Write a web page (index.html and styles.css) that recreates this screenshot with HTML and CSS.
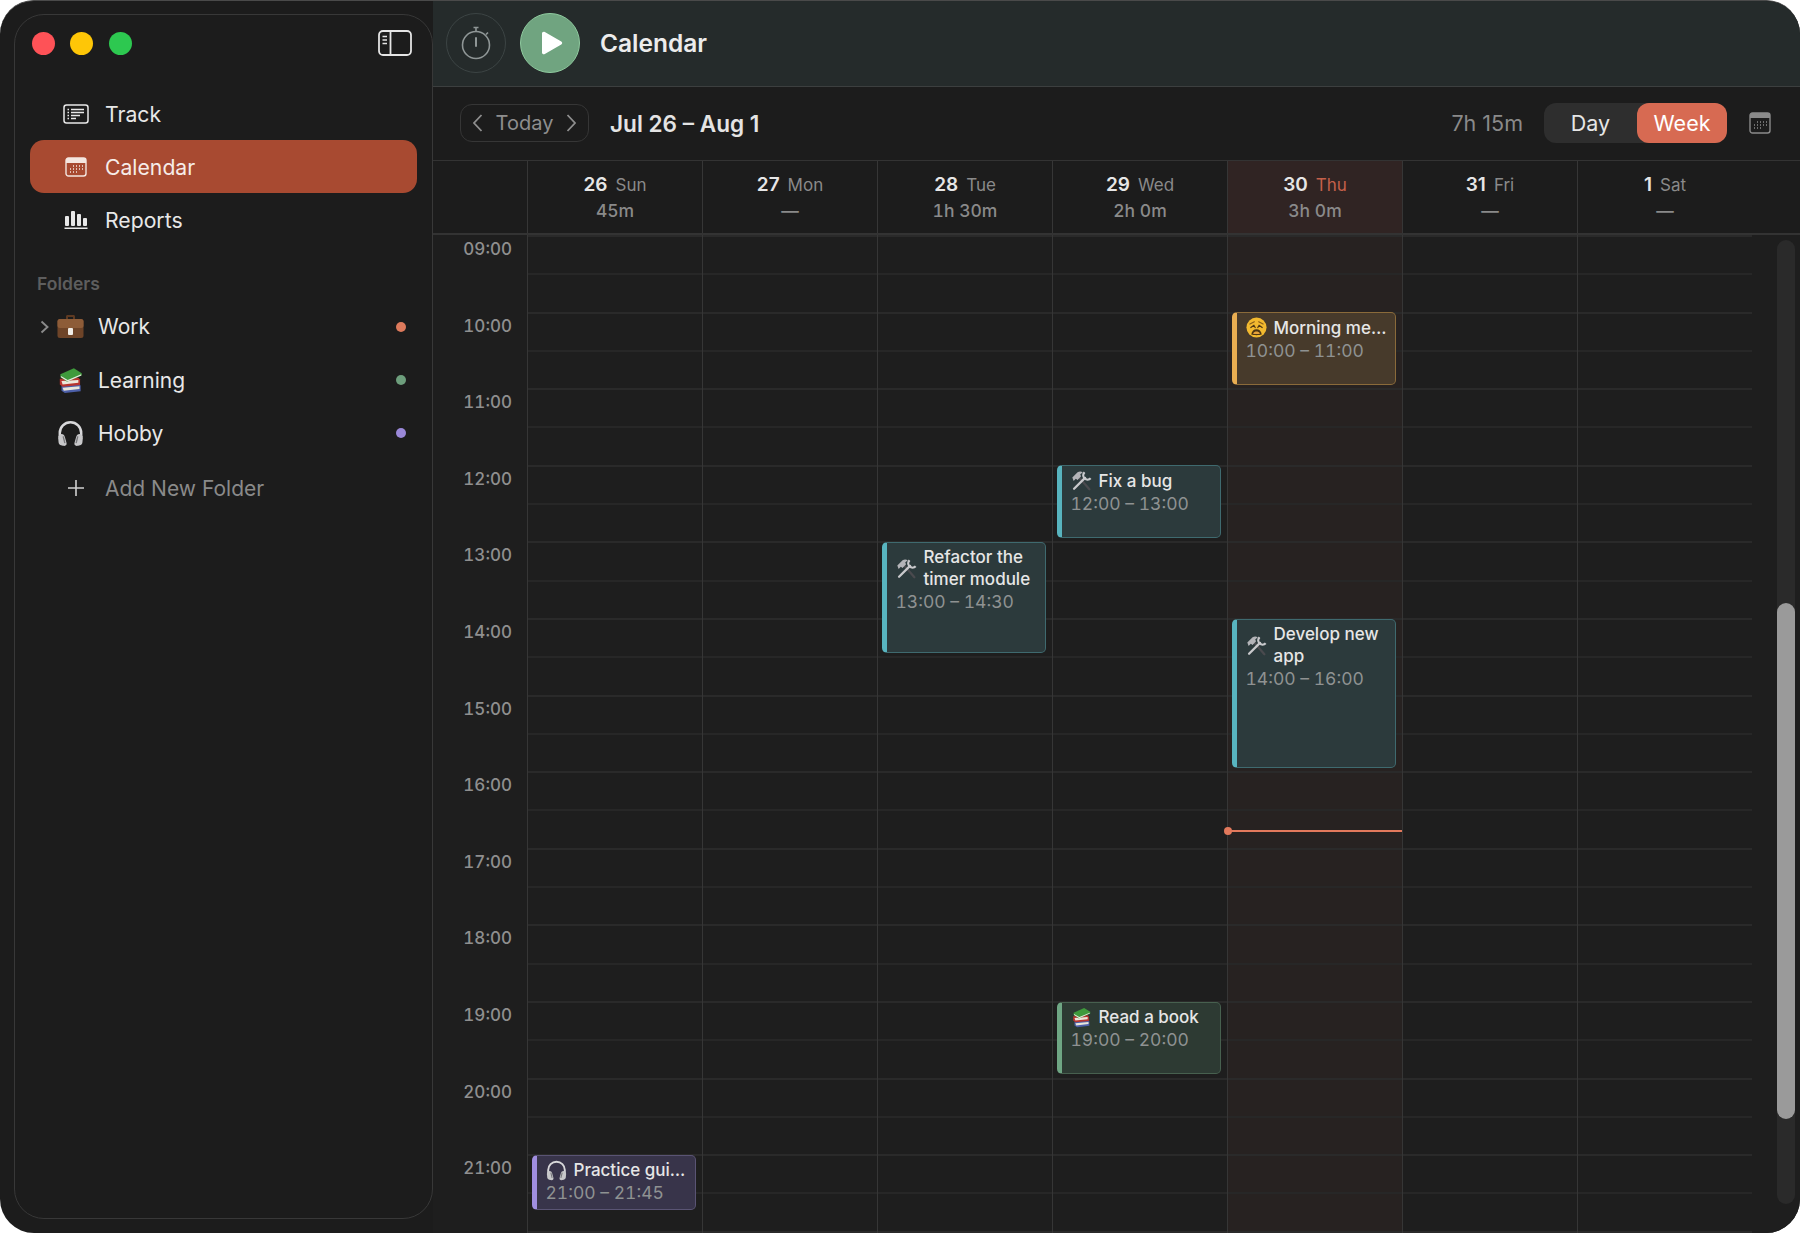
FILE: index.html
```html
<!DOCTYPE html>
<html lang="en">
<head>
<meta charset="UTF-8" />
<meta name="viewport" content="width=device-width, initial-scale=1" />
<title>Calendar</title>
<link rel="stylesheet" href="styles.css">
</head>
<body>

<svg class="defs" width="0" height="0" aria-hidden="true">
  <symbol id="tools" viewBox="0 0 24 24">
    <path d="M8 7 21 22" stroke="#4a4a4e" stroke-width="2.600" stroke-linecap="round"/>
    <path d="M1.500 8.500 7.500 2.500c2-1 4-1 6 0l-3 2.500 1 2-4 4.500-2-1.500-2.500 2.500z" fill="#b4b4b8"/>
    <path d="M3.500 21.500 16 9" stroke="#c9c9cc" stroke-width="2.600" stroke-linecap="round"/>
    <path d="M15.500 2.500c-2 2-2 5 0 7s5 2 7 0" fill="none" stroke="#c9c9cc" stroke-width="2.600"/>
  </symbol>
  <symbol id="books" viewBox="0 0 24 24">
    <path d="M4 16.500 19 15l2 1.500v5L7 23l-3-2z" fill="#4c5fa8"/>
    <path d="M5 18.500 20 17v2.500L6 21z" fill="#e8e4da"/>
    <path d="M2.500 10.500 19 9.500l1.500 1.500v5L5 17.500l-2.500-2z" fill="#b8342f"/>
    <path d="M4 12.500 19 11.500v2.500L5 15.500z" fill="#ece6da"/>
    <path d="M3 6.500 15 1l7 4.500v2L9 13 3 9z" fill="#3f9a3c"/>
    <path d="M3.500 8 9.500 11.500 21.500 6.500v1L9.500 12.800 3.500 9z" fill="#e8e8e0"/>
  </symbol>
  <symbol id="headphones" viewBox="0 0 24 24">
    <path d="M2.500 15v-3.500a9.500 9.500 0 0 1 19 0V15" fill="none" stroke="#d8d8da" stroke-width="2.200"/>
    <path d="M1 16c0-2 1.500-3.500 3-3.500s2.500 1 3 2.500l1.500 5.500c.3 1.500-.5 2.500-2 2.500S2 22.500 1.500 20.500z" fill="#c8c8ca"/>
    <path d="M23 16c0-2-1.500-3.500-3-3.500s-2.500 1-3 2.500l-1.500 5.500c-.3 1.500.5 2.500 2 2.500s4.500-.5 5-2.500z" fill="#c8c8ca"/>
    <path d="M5.500 14.500 7 20.500M18.500 14.500 17 20.500" stroke="#77777a" stroke-width="1.200"/>
  </symbol>
  <symbol id="weary" viewBox="0 0 24 24">
    <circle cx="12" cy="12" r="11.500" fill="#f2b92f"/>
    <path d="M4.500 8 9.500 5.500M19.500 8 14.500 5.500" stroke="#8a5f1a" stroke-width="1.400" stroke-linecap="round"/>
    <path d="M5.500 12 9 9.500 10.500 12M18.500 12 15 9.500 13.500 12" fill="none" stroke="#4d3613" stroke-width="1.400" stroke-linecap="round"/>
    <path d="M6 20c.5-4 3-6 6-6s5.500 2 6 6c-3 1-9 1-12 0z" fill="#4d3613"/>
    <path d="M8 19c1-2 2.500-2.500 4-2.500s3 .5 4 2.500c-2 .6-6 .6-8 0z" fill="#e8a33a"/>
  </symbol>
</svg>

<div class="window">
  <aside class="sidebar">
    <div class="side-panel">
      <div class="titlebar">
        <div class="lights">
          <span class="light light-red"></span>
          <span class="light light-yellow"></span>
          <span class="light light-green"></span>
        </div>
        <svg class="toggle" width="34" height="26" viewBox="0 0 34 26" fill="none" stroke="#e4e4e4" stroke-width="1.800">
          <rect x="1" y="1" width="32" height="24" rx="4"/>
          <path d="M12.500 1v24"/>
          <path d="M4.500 6.500h4.500M4.500 10h4.500M4.500 13.500h4.500" stroke-width="1.500"/>
        </svg>
      </div>

      <nav class="nav">
        <a class="nav-row">
          <span class="nav-icon">
            <svg width="26" height="20" viewBox="0 0 26 20" fill="none" stroke="#e8e8e8">
              <rect x="1" y="1" width="24" height="18" rx="2.500" stroke-width="1.500"/>
              <path d="M8 5.500h13M8 8.500h13M8 11.500h9M8 14.500h5M4.500 5.500h1.500M4.500 8.500h1.500M4.500 11.500h1.500M4.500 14.500h1.500" stroke-width="1.300"/>
            </svg>
          </span>
          Track
        </a>
        <a class="nav-row active">
          <span class="nav-icon">
            <svg width="22" height="20" viewBox="0 0 22 20" fill="none">
              <rect x="1" y="1" width="20" height="18" rx="2.500" stroke="#f4e6e0" stroke-width="1.400"/>
              <path d="M1 6V3.500A2.500 2.500 0 0 1 3.500 1h15A2.500 2.500 0 0 1 21 3.500V6z" fill="#f4e6e0"/>
              <path d="M8 9h1M11 9h1M14 9h1M17 9h1M5 12h1M8 12h1M11 12h1M14 12h1M17 12h1M5 15h1M8 15h1M11 15h1" stroke="#f4e6e0" stroke-width="1.300"/>
            </svg>
          </span>
          Calendar
        </a>
        <a class="nav-row">
          <span class="nav-icon">
            <svg width="24" height="20" viewBox="0 0 24 20" fill="#e8e8e8">
              <rect x="1" y="6" width="4" height="10" rx="1"/>
              <rect x="7" y="1" width="4" height="15" rx="1"/>
              <rect x="13" y="4" width="4" height="12" rx="1"/>
              <rect x="19" y="8" width="4" height="8" rx="1"/>
              <rect x="0.500" y="17.500" width="23" height="1.500"/>
            </svg>
          </span>
          Reports
        </a>
      </nav>

      <div class="side-label">Folders</div>

      <div class="folder">
        <svg class="chevron" width="9" height="14" viewBox="0 0 9 14" fill="none" stroke="#8a8a8a" stroke-width="1.900">
          <path d="m1.500 1.500 6 5.500-6 5.500"/>
        </svg>
        <svg class="emoji" width="27" height="27" viewBox="0 0 27 27">
          <path d="M9 6V3.500C9 2.500 9.800 2 10.500 2h6c.8 0 1.500.5 1.500 1.500V6h-2V4h-5v2z" fill="#5e3a22"/>
          <rect x="0.500" y="6" width="26" height="19" rx="2.500" fill="#6e4428"/>
          <rect x="0.500" y="6" width="26" height="9" rx="2.500" fill="#8d5c38"/>
          <rect x="11" y="15" width="5" height="7" rx="1" fill="#f0ece6"/>
        </svg>
        <span class="folder-name">Work</span>
        <span class="dot dot-work"></span>
      </div>
      <div class="folder">
        <span class="chevron-slot"></span>
        <svg class="emoji" width="27" height="27"><use href="#books"/></svg>
        <span class="folder-name">Learning</span>
        <span class="dot dot-learning"></span>
      </div>
      <div class="folder">
        <span class="chevron-slot"></span>
        <svg class="emoji" width="27" height="27"><use href="#headphones"/></svg>
        <span class="folder-name">Hobby</span>
        <span class="dot dot-hobby"></span>
      </div>

      <a class="nav-row add-row">
        <span class="nav-icon">
          <svg width="18" height="18" viewBox="0 0 18 18" stroke="#d0d0d0" stroke-width="1.600">
            <path d="M9 1v16M1 9h16"/>
          </svg>
        </span>
        Add New Folder
      </a>
    </div>
  </aside>

  <main class="main">
    <header class="header">
      <button class="round-btn timer-btn">
        <svg width="32" height="34" viewBox="0 0 32 34" fill="none" stroke="#8f9696" stroke-width="1.600">
          <circle cx="16" cy="19" r="13.500"/>
          <path d="M16 5.500V2M13.500 1.500h5M26 8.500l2-2" />
          <path d="M16 12v8" stroke-width="2" stroke-linecap="round"/>
        </svg>
      </button>
      <button class="round-btn play-btn">
        <svg width="22" height="24" viewBox="0 0 22 24" fill="#fff">
          <path d="M1 2.500C1 1 2.500.2 3.800 1l16.500 9.500c1.200.7 1.200 2.300 0 3L3.800 23C2.500 23.800 1 23 1 21.500z"/>
        </svg>
      </button>
      <h1 class="page-title">Calendar</h1>
    </header>

    <div class="toolbar">
      <div class="today-pill">
        <svg width="11" height="20" viewBox="0 0 11 20" fill="none" stroke="#8e8e8e" stroke-width="1.800"><path d="M9.500 2 2 10l7.500 8"/></svg>
        <span>Today</span>
        <svg width="11" height="20" viewBox="0 0 11 20" fill="none" stroke="#8e8e8e" stroke-width="1.800"><path d="m1.500 2 7.500 8-7.500 8"/></svg>
      </div>
      <div class="range">Jul 26 – Aug 1</div>
      <div class="total">7h 15m</div>
      <div class="switch">
        <span class="switch-item">Day</span>
        <span class="switch-item on">Week</span>
      </div>
      <svg class="cal-icon" width="22" height="22" viewBox="0 0 22 22" fill="none">
        <rect x="1" y="1" width="20" height="20" rx="2.500" stroke="#8a8a8a" stroke-width="1.400"/>
        <path d="M1 6V3.500A2.500 2.500 0 0 1 3.500 1h15A2.500 2.500 0 0 1 21 3.500V6z" fill="#8a8a8a"/>
        <path d="M8 10h1M11 10h1M14 10h1M17 10h1M5 13h1M8 13h1M11 13h1M14 13h1M17 13h1M5 16h1M8 16h1M11 16h1" stroke="#8a8a8a" stroke-width="1.300"/>
      </svg>
    </div>

    <div class="week-head">
      <div class="corner"></div>
      <div class="day-head"><div><b>26</b><span>Sun</span></div><small>45m</small></div>
      <div class="day-head"><div><b>27</b><span>Mon</span></div><small>—</small></div>
      <div class="day-head"><div><b>28</b><span>Tue</span></div><small>1h 30m</small></div>
      <div class="day-head"><div><b>29</b><span>Wed</span></div><small>2h 0m</small></div>
      <div class="day-head today"><div><b>30</b><span>Thu</span></div><small>3h 0m</small></div>
      <div class="day-head"><div><b>31</b><span>Fri</span></div><small>—</small></div>
      <div class="day-head"><div><b>1</b><span>Sat</span></div><small>—</small></div>
    </div>

    <div class="week-body">
      <div class="hours">
        <div>09:00</div><div>10:00</div><div>11:00</div><div>12:00</div>
        <div>13:00</div><div>14:00</div><div>15:00</div><div>16:00</div>
        <div>17:00</div><div>18:00</div><div>19:00</div><div>20:00</div>
        <div>21:00</div>
      </div>

      <div class="day">
        <div class="event ev-purple" style="--start:12;--len:.77">
          <div class="ev-title"><svg class="ev-icon"><use href="#headphones"/></svg><span>Practice gui…</span></div>
          <div class="ev-time">21:00 – 21:45</div>
        </div>
      </div>
      <div class="day"></div>
      <div class="day">
        <div class="event ev-teal" style="--start:4;--len:1.5">
          <div class="ev-title"><svg class="ev-icon"><use href="#tools"/></svg><span>Refactor the timer module</span></div>
          <div class="ev-time">13:00 – 14:30</div>
        </div>
      </div>
      <div class="day">
        <div class="event ev-teal" style="--start:3;--len:1">
          <div class="ev-title"><svg class="ev-icon"><use href="#tools"/></svg><span>Fix a bug</span></div>
          <div class="ev-time">12:00 – 13:00</div>
        </div>
        <div class="event ev-green" style="--start:10;--len:1">
          <div class="ev-title"><svg class="ev-icon"><use href="#books"/></svg><span>Read a book</span></div>
          <div class="ev-time">19:00 – 20:00</div>
        </div>
      </div>
      <div class="day today">
        <div class="event ev-amber" style="--start:1;--len:1">
          <div class="ev-title"><svg class="ev-icon"><use href="#weary"/></svg><span class="one-line">Morning me…</span></div>
          <div class="ev-time">10:00 – 11:00</div>
        </div>
        <div class="event ev-teal" style="--start:5;--len:2">
          <div class="ev-title"><svg class="ev-icon"><use href="#tools"/></svg><span>Develop new app</span></div>
          <div class="ev-time">14:00 – 16:00</div>
        </div>
        <div class="now-line"></div>
      </div>
      <div class="day"></div>
      <div class="day"></div>

      <div class="scrollbar"><div class="thumb"></div></div>
    </div>
  </main>
</div>

</body>
</html>
```

FILE: styles.css
```css
* {
  box-sizing: border-box;
}
html, body {
  height: 100%;
}
body {
  margin: 0;
  background: #fff;
  font-family: Inter, 'Noto Sans', sans-serif;
  color: #e8e8e8;
  overflow: hidden;
}
.defs {
  position: absolute;
}
svg {
  display: block;
  flex-shrink: 0;
}

.window {
  display: flex;
  height: 100vh;
  background: #1c1c1c;
  border-top: 1px solid #4a4a4a;
  border-radius: 34px;
  overflow: hidden;
}

/* sidebar */
.sidebar {
  width: 433px;
  flex-shrink: 0;
  padding: 13px 0 14px 14px;
}
.side-panel {
  height: 100%;
  padding: 0 15px;
  border: 1.5px solid #383838;
  border-radius: 30px;
}
.titlebar {
  display: flex;
  align-items: center;
  justify-content: space-between;
  height: 56px;
  padding: 0 5px 0 1.5px;
}
.lights {
  display: flex;
  gap: 15.5px;
}
.light {
  width: 23px;
  height: 23px;
  border-radius: 50%;
}
.light-red { background: #fe5257; }
.light-yellow { background: #fec607; }
.light-green { background: #2dc850; }

.nav {
  margin-top: 16px;
}
.nav-row {
  display: flex;
  align-items: center;
  gap: 13px;
  height: 53px;
  padding-left: 30px;
  border-radius: 14px;
  font-size: 21.200px;
  color: #e8e8e8;
}
.nav-row.active {
  background: #a84a31;
  color: #f6ece8;
}
.nav-icon {
  display: flex;
  justify-content: center;
  width: 32px;
}
.side-label {
  margin: 27px 0 5px 7px;
  height: 22px;
  line-height: 22px;
  font-size: 17.500px;
  font-weight: 600;
  color: #5e5e5e;
}
.folder {
  display: flex;
  align-items: center;
  height: 53.400px;
  padding: 0 11px 0 10px;
  font-size: 21px;
}
.chevron-slot {
  width: 9px;
}
.emoji {
  margin: 0 14px 0 8px;
}
.folder-name {
  flex: 1;
}
.dot {
  width: 10px;
  height: 10px;
  border-radius: 50%;
}
.dot-work { background: #dd7a5c; }
.dot-learning { background: #6d9e7c; }
.dot-hobby { background: #9a88d8; }
.add-row {
  margin-top: 1.500px;
  font-size: 21px;
  color: #8a8a8a;
}

/* main area */
.main {
  flex: 1;
  min-width: 0;
  display: flex;
  flex-direction: column;
}
.header {
  display: flex;
  align-items: center;
  gap: 14px;
  height: 85.500px;
  flex-shrink: 0;
  padding-left: 13px;
  background: #252b2b;
  border-bottom: 1.5px solid #3c3f3f;
}
.round-btn {
  display: flex;
  align-items: center;
  justify-content: center;
  width: 60px;
  height: 60px;
  padding: 0;
  border-radius: 50%;
  background: none;
  border: 1px solid #3c4444;
}
.play-btn {
  background: #70a480;
  border: 1.5px solid #8fcb9f;
  padding-left: 4px;
}
.page-title {
  margin: 0 0 0 6px;
  font-size: 24.500px;
  font-weight: 600;
  color: #ececec;
}

.toolbar {
  display: flex;
  align-items: center;
  height: 74.500px;
  flex-shrink: 0;
  padding: 0 29px 0 27px;
  border-bottom: 1.5px solid #333;
}
.today-pill {
  display: flex;
  align-items: center;
  justify-content: space-between;
  width: 129px;
  height: 38px;
  padding: 0 11px;
  border: 1px solid #363636;
  border-radius: 12px;
  font-size: 20px;
  color: #8e8e8e;
}
.range {
  margin-left: 21px;
  flex: 1;
  font-size: 22.600px;
  font-weight: 600;
  color: #e4e4e4;
}
.total {
  margin-right: 21px;
  font-size: 21.500px;
  color: #8a8a8a;
}
.switch {
  display: flex;
  width: 183px;
  height: 40px;
  border-radius: 12px;
  background: #2e2e2e;
  font-size: 21.500px;
}
.switch-item {
  flex: 1;
  display: flex;
  align-items: center;
  justify-content: center;
  color: #e6e6e6;
  border-radius: 12px;
}
.switch-item.on {
  flex: 0 0 90px;
  background: #d76a52;
  color: #fff;
}
.cal-icon {
  margin-left: 22px;
}

.week-head, .week-body {
  display: grid;
  grid-template-columns: 94px repeat(7, 175px);
}
.week-head {
  height: 74px;
  flex-shrink: 0;
  border-bottom: 2px solid #333;
}
.day-head {
  display: flex;
  flex-direction: column;
  align-items: center;
  padding-top: 12px;
  border-left: 1px solid #363636;
  font-size: 17px;
  color: #8a8a8a;
}
.day-head b {
  margin-right: 8px;
  font-size: 19px;
  font-weight: 600;
  color: #e6e6e6;
}
.day-head small {
  margin-top: 4px;
  font-size: 17.500px;
  font-weight: 500;
  font-variant-numeric: tabular-nums;
}
.day-head.today {
  background: #302423;
}
.day-head.today span {
  color: #c4604a;
}

.week-body {
  flex: 1;
  min-height: 0;
  position: relative;
  background: #1e1e1e;
  overflow: hidden;
}
.hours {
  padding-right: 15px;
  text-align: right;
  font-size: 17px;
  font-weight: 500;
  font-variant-numeric: tabular-nums;
  color: #8f8f8f;
  overflow: hidden;
}
.hours div {
  height: 76.600px;
  padding-top: 4px;
  line-height: 20px;
}
.day {
  position: relative;
  border-left: 1px solid #363636;
  background: repeating-linear-gradient(
    to bottom,
    #2a2a2a 0,
    #2a2a2a 2px,
    transparent 2px,
    transparent 38.300px,
    #272727 38.300px,
    #272727 40.300px,
    transparent 40.300px,
    transparent 76.600px
  );
}
.day.today {
  background-color: #272221;
}

.event {
  position: absolute;
  left: 3.500px;
  right: 6.500px;
  top: calc(var(--start) * 76.600px + 0.500px);
  height: calc(var(--len) * 76.600px - 4px);
  padding: 3.500px 6px 0 9px;
  border: 1.5px solid;
  border-left-width: 5px;
  border-radius: 5px;
}
.ev-title {
  display: flex;
  align-items: center;
  gap: 7px;
  font-size: 17px;
  font-weight: 500;
  line-height: 22px;
  color: #e6e6e6;
}
.one-line {
  white-space: nowrap;
}
.ev-icon {
  width: 21px;
  height: 21px;
}
.ev-time {
  font-size: 17.500px;
  line-height: 23px;
  font-variant-numeric: tabular-nums;
  color: #8f9292;
}
.ev-teal {
  background: #2c3a3c;
  border-color: #3f6a6f;
  border-left-color: #58b4bf;
}
.ev-green {
  background: #2d3a33;
  border-color: #47604f;
  border-left-color: #6fa684;
}
.ev-amber {
  background: #473a2b;
  border-color: #8a6a3a;
  border-left-color: #e9ae52;
}
.ev-purple {
  background: #38344a;
  border-color: #5a5474;
  border-left-color: #a08ee0;
}

.now-line {
  position: absolute;
  left: 0;
  right: 0;
  top: 595px;
  height: 2px;
  background: #e2795c;
}
.now-line::before {
  content: "";
  position: absolute;
  left: -4px;
  top: -3px;
  width: 8px;
  height: 8px;
  border-radius: 50%;
  background: #e2795c;
}

.scrollbar {
  position: absolute;
  left: 1344px;
  top: 5px;
  width: 18px;
  height: 964px;
  border-radius: 9px;
  background: #2a2a2a;
}
.thumb {
  margin-top: 363px;
  height: 516px;
  border-radius: 9px;
  background: #9a9a9a;
}
```
